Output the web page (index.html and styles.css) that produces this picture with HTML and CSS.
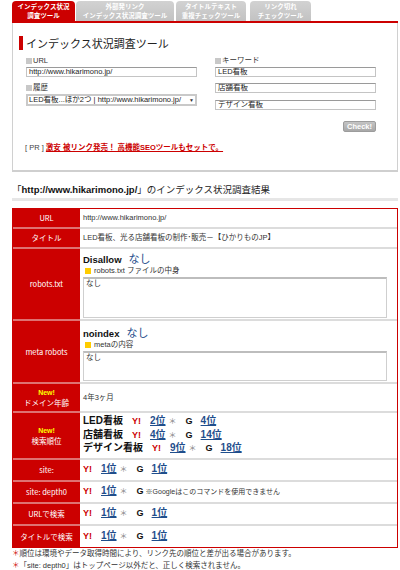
FILE: index.html
```html
<!DOCTYPE html>
<html lang="ja">
<head>
<meta charset="utf-8">
<title>インデックス状況調査ツール</title>
<link rel="stylesheet" href="styles.css">
</head>
<body>
<div class="page">
  <ul class="tabs">
    <li class="tab tab-1">インデックス状況<br>調査ツール</li>
    <li class="tab tab-2">外部発リンク<br>インデックス状況調査ツール</li>
    <li class="tab tab-3">タイトルテキスト<br>重複チェックツール</li>
    <li class="tab tab-4">リンク切れ<br>チェックツール</li>
  </ul>

  <div class="toolbox">
    <h1 class="tool-title">インデックス状況調査ツール</h1>
    <div class="tool-form">
      <div class="col">
        <div class="label"><span class="sq"></span>URL</div>
        <div class="field">http://www.hikarimono.jp/</div>
        <div class="label label-hist"><span class="sq"></span>履歴</div>
        <div class="select"><div class="select-inner"><span>LED看板...ほか2つ | http://www.hikarimono.jp/</span><span class="arrow">▼</span></div></div>
      </div>
      <div class="col">
        <div class="label"><span class="sq"></span>キーワード</div>
        <div class="field">LED看板</div>
        <div class="field field-next">店舗看板</div>
        <div class="field field-last">デザイン看板</div>
        <div class="btn-row"><span class="btn">Check!</span></div>
      </div>
    </div>
    <p class="pr">[ PR ] <a class="pr-link">激安 被リンク発売！ 高機能SEOツールもセットで。</a></p>
  </div>

  <h2 class="result-title">「<b>http://www.hikarimono.jp/</b>」のインデックス状況調査結果</h2>

  <table class="result">
    <tr class="r20"><th>URL</th><td>http://www.hikarimono.jp/</td></tr>
    <tr class="r20"><th>タイトル</th><td>LED看板、光る店舗看板の制作･販売－【ひかりものJP】</td></tr>
    <tr class="r72"><th>robots.txt</th><td class="block-robots">
      <div class="stat"><b>Disallow</b><span class="nashi">なし</span></div>
      <div class="sub"><span class="ysq"></span>robots.txt ファイルの中身</div>
      <div class="ta ta-robots">なし</div>
    </td></tr>
    <tr class="r63"><th>meta robots</th><td class="block-meta">
      <div class="stat"><b>noindex</b><span class="nashi">なし</span></div>
      <div class="sub"><span class="ysq"></span>metaの内容</div>
      <div class="ta ta-meta">なし</div>
    </td></tr>
    <tr class="r29"><th><span class="new">New!</span><br>ドメイン年齢</th><td>4年3ヶ月</td></tr>
    <tr class="r47"><th><span class="new">New!</span><br>検索順位</th><td>
      <div class="rank-line"><b class="kw">LED看板</b><span class="y">Y!</span><a class="rk">2位</a><span class="ast">＊</span><b class="g">G</b><a class="rk">4位</a></div>
      <div class="rank-line"><b class="kw">店舗看板</b><span class="y">Y!</span><a class="rk">4位</a><span class="ast">＊</span><b class="g">G</b><a class="rk">14位</a></div>
      <div class="rank-line"><b class="kw">デザイン看板</b><span class="y">Y!</span><a class="rk">9位</a><span class="ast">＊</span><b class="g">G</b><a class="rk">18位</a></div>
    </td></tr>
    <tr class="r22"><th>site:</th><td><div class="rank-line"><span class="y">Y!</span><a class="rk">1位</a><span class="ast">＊</span><b class="g">G</b><a class="rk">1位</a></div></td></tr>
    <tr class="r22"><th>site: depth0</th><td><div class="rank-line"><span class="y">Y!</span><a class="rk">1位</a><span class="ast">＊</span><b class="g">G</b><span class="gnote">※Googleはこのコマンドを使用できません</span></div></td></tr>
    <tr class="r22"><th>URLで検索</th><td><div class="rank-line"><span class="y">Y!</span><a class="rk">1位</a><span class="ast">＊</span><b class="g">G</b><a class="rk">1位</a></div></td></tr>
    <tr class="r21 last"><th>タイトルで検索</th><td><div class="rank-line"><span class="y">Y!</span><a class="rk">1位</a><span class="ast">＊</span><b class="g">G</b><a class="rk">1位</a></div></td></tr>
  </table>

  <div class="notes">
    <p><span class="mark">＊</span>順位は環境やデータ取得時間により、リンク先の順位と差が出る場合があります。</p>
    <p><span class="mark">＊</span>「site: depth0」はトップページ以外だと、正しく検索されません。</p>
  </div>
</div>
</body>
</html>
```

FILE: styles.css
```css
html, body {
  margin: 0;
  padding: 0;
  background: #fff;
}
body {
  font-family: "Liberation Sans", "Noto Sans CJK JP", sans-serif;
  font-size: 7.5px;
  color: #333;
}
.page {
  width: 386px;
  margin-left: 12px;
  padding-top: 1px;
}

/* tabs */
.tabs {
  list-style: none;
  margin: 0;
  padding: 0;
  display: flex;
  align-items: flex-end;
  height: 20px;
  border-bottom: 2px solid #cc0000;
}
.tab {
  box-sizing: border-box;
  height: 20px;
  border-radius: 4px 4px 0 0;
  background: linear-gradient(#d2d2d2, #c2c2c2);
  color: #fff;
  font-family: "Noto Sans CJK JP", sans-serif;
  font-weight: bold;
  font-size: 6.5px;
  line-height: 9.4px;
  text-align: center;
  padding-top: 1px;
  white-space: nowrap;
}
.tab-1 { width: 63px; margin-right: 1px; background: #cc0000; }
.tab-2 { width: 98px; margin-right: 2px; }
.tab-3 { width: 70px; margin-right: 4px; }
.tab-4 { width: 61px; }

/* tool box */
.toolbox {
  border: 1px solid #d0d0d0;
  border-top: 0;
  border-bottom: 2px solid #cfcfcf;
  padding: 13px 0 18px;
}
.tool-title {
  margin: 0 0 0 6px;
  border-left: 4px solid #cc0000;
  padding-left: 3px;
  font-family: "Noto Sans CJK JP", sans-serif;
  font-size: 11px;
  line-height: 14px;
  font-weight: normal;
  color: #222;
}
.tool-form {
  display: grid;
  grid-template-columns: 171px 161px;
  column-gap: 18px;
  margin: 6px 0 0 13px;
}
.col {
  display: flex;
  flex-direction: column;
}
.label {
  display: flex;
  align-items: center;
  height: 9px;
  line-height: 9px;
  font-size: 7.5px;
  color: #333;
}
.label-hist { margin-top: 6px; }
.sq {
  width: 6px;
  height: 6px;
  background: #c8c8c8;
  margin-right: 1px;
}
.field {
  box-sizing: border-box;
  height: 10px;
  margin-top: 2px;
  border: 1px solid #c4c4c4;
  border-top-color: #9a9a9a;
  padding-left: 2px;
  font-size: 7.5px;
  line-height: 8px;
  color: #222;
  white-space: nowrap;
  overflow: hidden;
}
.field-next { margin-top: 6px; }
.field-last { margin-top: 7px; }
.select {
  box-sizing: border-box;
  height: 12px;
  margin-top: 2px;
  background: #c9c9c9;
  padding: 2px;
}
.select-inner {
  height: 8px;
  background: #fff;
  display: flex;
  justify-content: space-between;
  align-items: center;
  padding: 0 1px;
  font-size: 7.5px;
  line-height: 8px;
  color: #222;
  white-space: nowrap;
  overflow: hidden;
}
.arrow {
  font-size: 5px;
  color: #333;
}
.btn-row {
  display: flex;
  justify-content: flex-end;
  margin-top: 11px;
}
.btn {
  box-sizing: border-box;
  width: 33px;
  height: 11px;
  border: 1px solid #9c9c9c;
  border-radius: 2px;
  background: linear-gradient(#c4c4c4, #a8a8a8);
  color: #fff;
  font-weight: bold;
  font-size: 7.5px;
  line-height: 9px;
  text-align: center;
}
.pr {
  margin: 12px 0 0;
  padding-left: 12px;
  line-height: 8px;
  font-size: 7.5px;
  color: #444;
}
.pr-link {
  color: #cc0000;
  text-decoration: underline;
  font-weight: bold;
}

/* result */
.result-title {
  margin: 12px 0 0;
  padding-bottom: 2px;
  border-bottom: 3px solid #e6e6e6;
  font-size: 9.5px;
  line-height: 12px;
  font-weight: normal;
  color: #222;
}
.result-title b {
  font-weight: bold;
  font-size: 9.5px;
  color: #111;
}
.result {
  width: 386px;
  margin-top: 7px;
  border: 1px solid #cc0000;
  border-collapse: separate;
  border-spacing: 0;
}
.result th {
  width: 67px;
  padding: 0;
  background: #cc0000;
  color: #fff;
  font-weight: normal;
  font-size: 7.5px;
  line-height: 10px;
  text-align: center;
  vertical-align: middle;
  border-bottom: 2px solid #de7272;
  font-family: "Noto Sans CJK JP", sans-serif;
}
.result td {
  padding: 0 10px 0 3px;
  border-bottom: 2px solid #dcdcdc;
  font-size: 7.5px;
  line-height: 10px;
  color: #333;
  vertical-align: middle;
}
.result tr.last th,
.result tr.last td { border-bottom: 0; }
.r20 { height: 20px; }
.r21 { height: 21px; }
.r22 { height: 22px; }
.r29 { height: 29px; }
.r47 { height: 47px; }
.r63 { height: 63px; }
.r72 { height: 72px; }

.new {
  color: #ffff00;
  font-weight: bold;
  font-size: 7px;
  font-family: "Liberation Sans", sans-serif;
}
.result td.block-robots { vertical-align: top; padding-top: 4px; }
.result td.block-meta { vertical-align: top; padding-top: 6px; }
.stat {
  line-height: 11px;
  font-size: 9.5px;
  color: #111;
}
.stat b { font-weight: bold; }
.nashi {
  color: #1f4e8c;
  font-size: 11px;
  margin-left: 7px;
  font-family: "Noto Sans CJK JP", sans-serif;
}
.sub {
  display: flex;
  align-items: center;
  line-height: 10px;
  height: 11px;
  font-size: 7.5px;
}
.ysq {
  width: 6px;
  height: 6px;
  background: #ffcc00;
  margin: 0 3px 0 2px;
}
.ta {
  box-sizing: border-box;
  margin-top: 1px;
  border: 1px solid #cfcfcf;
  border-top: 2px solid #bdbdbd;
  padding: 0 2px;
  font-size: 7.5px;
  line-height: 9px;
}
.ta-robots { height: 41px; }
.ta-meta { height: 30px; }

.rank-line {
  display: flex;
  align-items: baseline;
  line-height: 12.5px;
  white-space: nowrap;
}
.kw {
  font-size: 10px;
  font-weight: bold;
  color: #111;
  margin-right: 9px;
}
.y {
  color: #cc0000;
  font-weight: bold;
  font-size: 9px;
  margin-right: 9px;
}
.rk {
  color: #1f4e8c;
  font-weight: bold;
  font-size: 10px;
  text-decoration: underline;
}
.ast {
  color: #888;
  font-size: 8px;
  margin: 0 9px 0 3px;
}
.g {
  font-size: 9px;
  font-weight: bold;
  color: #111;
  margin-right: 8px;
}
.gnote {
  font-size: 7px;
  color: #333;
  margin-left: -6px;
}

.notes {
  font-size: 7.5px;
  line-height: 12px;
  color: #333;
}
.notes p { margin: 0; }
.mark { color: #cc0000; }
```
